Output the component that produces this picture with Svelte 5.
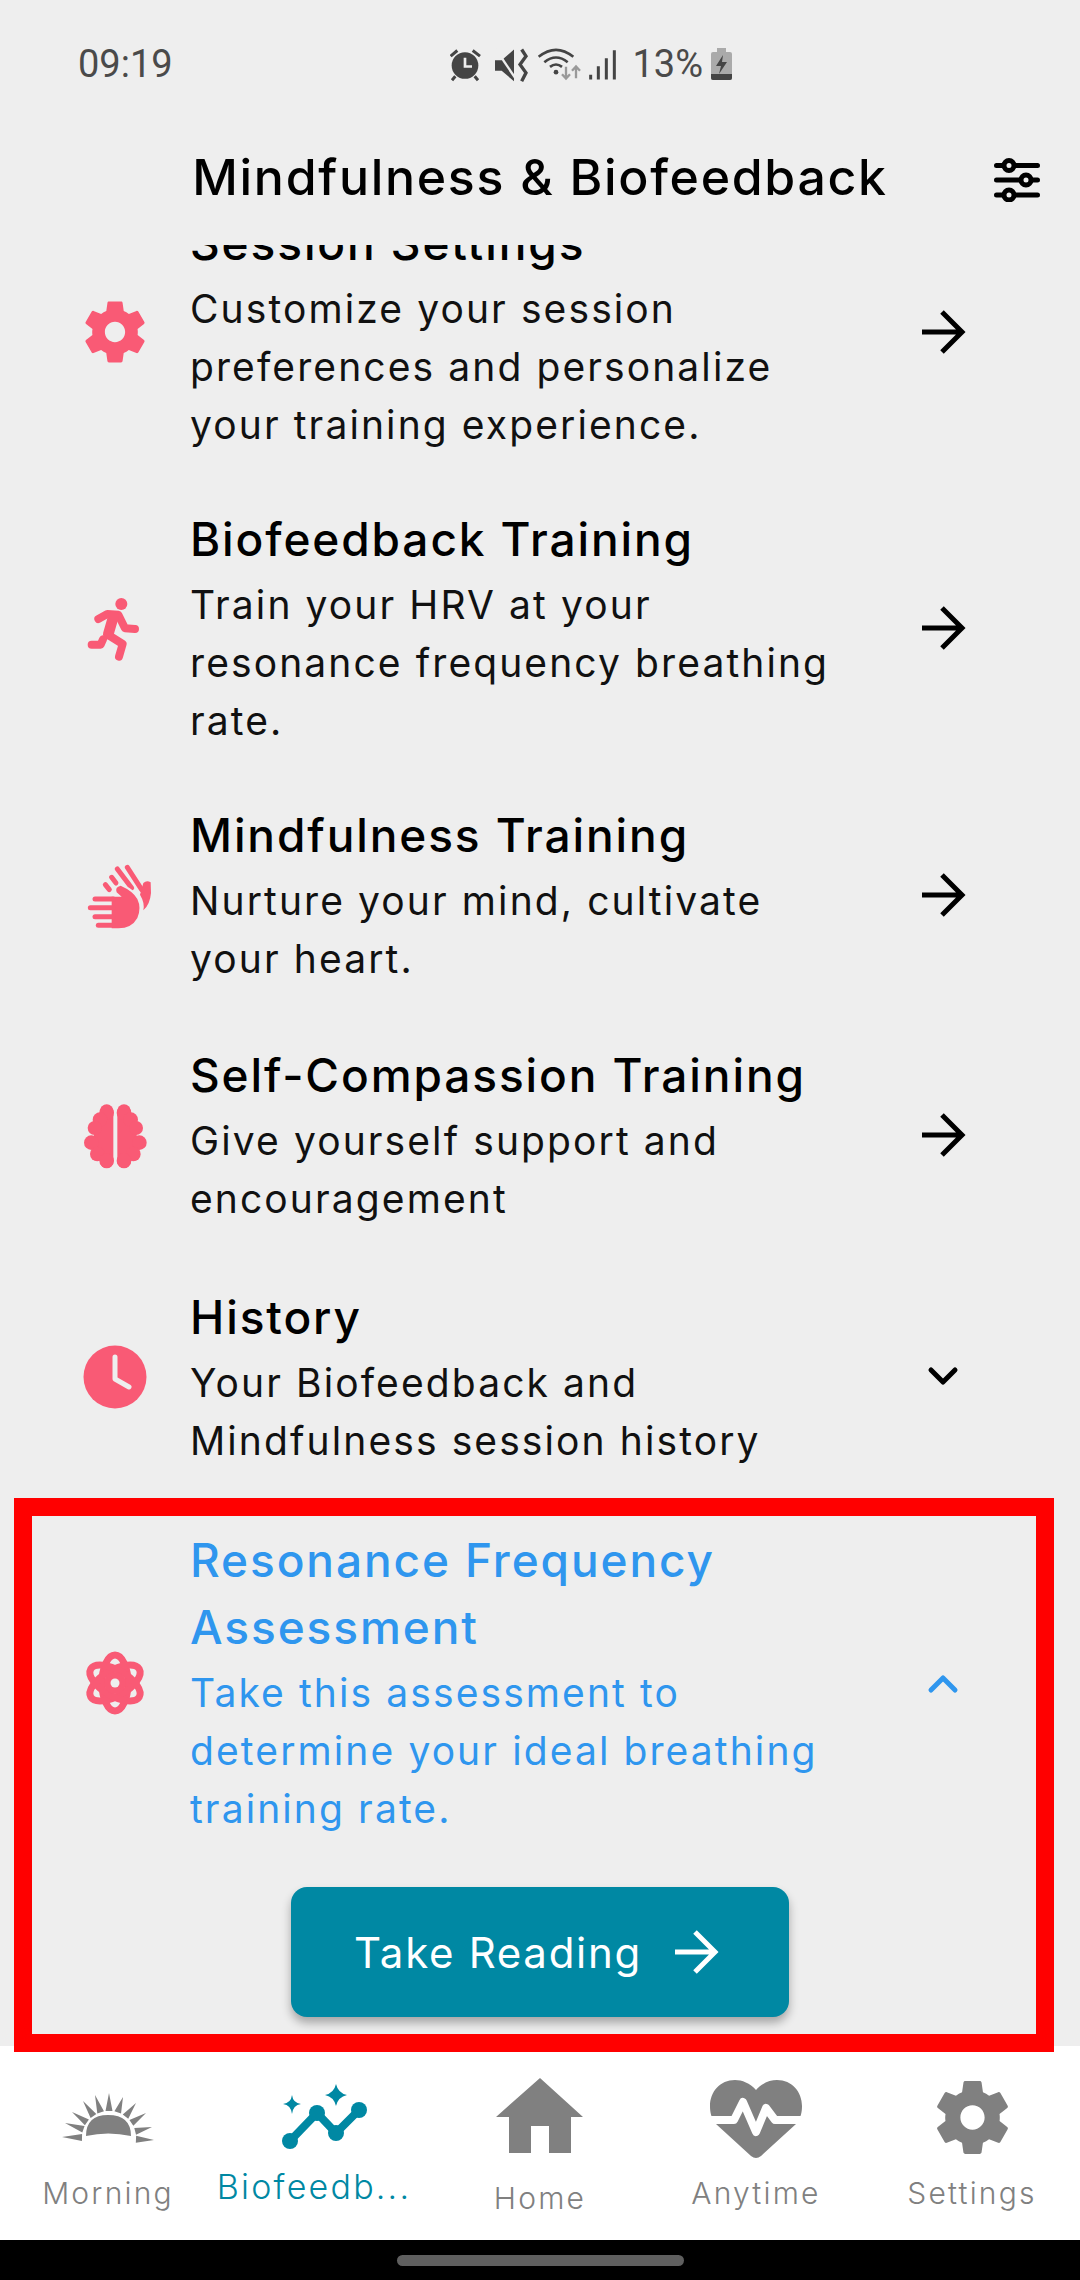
<script>
  const rows = [
    { icon: "gear", title: "Session Settings", text: "Customize your session preferences and personalize your training experience." },
    { icon: "run", title: "Biofeedback Training", text: "Train your HRV at your resonance frequency breathing rate." },
    { icon: "hands", title: "Mindfulness Training", text: "Nurture your mind, cultivate your heart." },
    { icon: "brain", title: "Self-Compassion Training", text: "Give yourself support and encouragement" },
    { icon: "clock", title: "History", text: "Your Biofeedback and Mindfulness session history", end: "down" }
  ];

  const gear =
    "M19.14 12.94c.04-.3.06-.61.06-.94 0-.32-.02-.64-.07-.94l2.03-1.58c.18-.14.23-.41.12-.61l-1.92-3.32c-.12-.22-.37-.29-.59-.22l-2.39.96c-.5-.38-1.03-.7-1.62-.94l-.36-2.54c-.04-.24-.24-.41-.48-.41h-3.84c-.24 0-.43.17-.47.41l-.36 2.54c-.59.24-1.13.57-1.62.94l-2.39-.96c-.22-.08-.47 0-.59.22L2.74 8.87c-.12.21-.08.47.12.61l2.03 1.58c-.05.3-.09.63-.09.94s.02.64.07.94l-2.03 1.58c-.18.14-.23.41-.12.61l1.92 3.32c.12.22.37.29.59.22l2.39-.96c.5.38 1.03.7 1.62.94l.36 2.54c.05.24.24.41.48.41h3.84c.24 0 .44-.17.47-.41l.36-2.54c.59-.24 1.13-.56 1.62-.94l2.39.96c.22.08.47 0 .59-.22l1.92-3.32c.12-.22.07-.47-.12-.61l-2.01-1.58zM12 15.2c-1.76 0-3.2-1.44-3.2-3.2s1.44-3.2 3.2-3.2 3.2 1.44 3.2 3.2-1.44 3.2-3.2 3.2z";

  // sunrise rays, tips measured off the logo
  const tips = [[62, 107], [65, 93], [72, 82], [83, 71], [95, 65], [109, 63], [123, 67], [136, 73], [146, 83], [152, 97], [154, 110]];
  const rays = tips.map(([x, y]) => {
    const dx = x - 109, dy = y - 108;
    const len = Math.hypot(dx, dy);
    const ux = dx / len, uy = dy / len;
    const bx = 109 + ux * 27, by = 108 + uy * 27;
    return `${x},${y} ${bx - uy * 3.5},${by + ux * 3.5} ${bx + uy * 3.5},${by - ux * 3.5}`;
  }).join(" M");

  const brainLobes = [[170, 817, 22], [150, 838, 22], [134, 863, 21], [124, 907, 22], [142, 941, 22], [170, 961, 22]];
</script>

{#snippet arrow(cls)}
  <svg class={cls} viewBox="0 0 60 60"><path d="M9 30H49M29 10L49 30L29 50" /></svg>
{/snippet}

{#snippet rowIcon(name)}
  {#if name === "gear"}
    <svg class="ico" viewBox="0 0 24 24"><path d={gear} /></svg>
  {:else if name === "run"}
    <svg class="ico" viewBox="81 960 228 228">
      <circle cx="214" cy="1002" r="18" />
      <g class="limb">
        <path d="M145 1047L172 1032L205 1034L225 1075L255 1077" />
        <path d="M190 1040L175 1092" stroke-width="32" />
        <path d="M175 1095L218 1122L207 1160" />
        <path d="M159 1108L152 1124L125 1124" />
      </g>
    </svg>
  {:else if name === "hands"}
    <svg class="ico" viewBox="81 52 228 228">
      <g class="limb thin">
        <path d="M232 83L275 150" />
        <path d="M202 88L245 145" />
        <path d="M185 113L198 130" />
        <path d="M166 135L178 150" />
      </g>
      <path d="M270 165L280 130Q290 120 302 128L303 160Q300 195 280 212Q285 190 270 165Z" />
      <path class="gap" d="M205 135Q275 160 272 215Q268 270 205 272" />
      <path d="M185 171L215 171L200 158Q194 142 212 138Q250 155 262 178Q275 205 262 235Q245 266 205 266L185 266Z" />
      <g class="limb thin">
        <path d="M135 178H190" />
        <path d="M121 204H190" />
        <path d="M135 231H190" />
        <path d="M145 257H190" />
      </g>
    </svg>
  {:else if name === "brain"}
    <svg class="ico" viewBox="81 770 228 228">
      <rect x="150" y="792" width="40" height="192" rx="20" />
      <rect x="202" y="792" width="40" height="192" rx="20" />
      <rect x="132" y="830" width="50" height="125" />
      <rect x="210" y="830" width="50" height="125" />
      {#each brainLobes as [x, y, r]}
        <circle cx={x} cy={y} {r} />
        <circle cx={392 - x} cy={y} {r} />
      {/each}
    </svg>
  {:else if name === "clock"}
    <svg class="ico" viewBox="0 0 76 76">
      <circle cx="38" cy="38" r="31.5" />
      <path class="hand" d="M38 18V40L52 48" />
    </svg>
  {:else}
    <svg class="ico" viewBox="0 0 76 76">
      <g class="orbit">
        <ellipse cx="38" cy="38" rx="13" ry="28" />
        <ellipse cx="38" cy="38" rx="13" ry="28" transform="rotate(60 38 38)" />
        <ellipse cx="38" cy="38" rx="13" ry="28" transform="rotate(120 38 38)" />
      </g>
      <circle cx="38" cy="38" r="11" />
      <circle class="dot" cx="38" cy="38" r="4.5" />
    </svg>
  {/if}
{/snippet}

<div class="screen">
  <div class="status">
    <span class="time">09:19</span>
    <div class="status-right">
      <svg class="status-icons" viewBox="40 40 498 110">
        <circle cx="85" cy="98" r="40" fill="#444" />
        <path d="M42 70L62 53M108 53L130 70M56 130L46 142M114 130L124 142" stroke="#444" stroke-width="9" fill="none" />
        <path d="M85 75V101H106" stroke="#eee" stroke-width="8" fill="none" />
        <path d="M175 82H195L232 50V145L195 114H175Z" fill="#444" />
        <path d="M178 50L240 142" stroke="#eee" stroke-width="7" />
        <path d="M255 50L268 70L250 95L268 120L255 145" stroke="#444" stroke-width="10" fill="none" />
        <g stroke="#444" stroke-width="8" fill="none">
          <path d="M306 72Q358 30 410 72" />
          <path d="M323 88Q358 60 393 88" />
          <path d="M340 102Q358 88 376 102" />
        </g>
        <circle cx="358" cy="118" r="7" fill="#444" />
        <path d="M388 102V135M376 124L388 137L400 124M418 136V102M406 114L418 101L430 114" stroke="#999" stroke-width="7" fill="none" />
        <g stroke="#444" stroke-width="9">
          <path d="M462 126V140M485 100V140M509 76V140M533 52V140" />
        </g>
      </svg>
      <span class="pct">13%</span>
      <svg class="battery" viewBox="0 0 21 32">
        <rect x="6" y="0" width="9" height="5" fill="#aaa" />
        <rect x="0" y="4" width="21" height="28" rx="2" fill="#aaa" />
        <path d="M0 26H21V30Q21 32 19 32H2Q0 32 0 30Z" fill="#444" />
        <path d="M12 7L5 18H10L8 26L16 14H11Z" fill="#444" />
      </svg>
    </div>
  </div>

  <header>
    <span></span>
    <h1>Mindfulness &amp; Biofeedback</h1>
    <svg class="sliders" viewBox="0 0 46 44">
      <path d="M2.5 7.5H9M21 7.5H43.5M2.5 22H26M38 22H43.5M2.5 37H9M21 37H43.5" />
      <circle cx="15" cy="7.500" r="5" />
      <circle cx="32" cy="22" r="5" />
      <circle cx="15" cy="37" r="5" />
    </svg>
  </header>

  <div class="list">
    {#each rows as row}
      <div class="row" class:last={row.end === "down"}>
        {@render rowIcon(row.icon)}
        <div class="copy">
          <h2>{row.title}</h2>
          <p>{row.text}</p>
        </div>
        {#if row.end === "down"}
          <svg class="chev" viewBox="0 0 60 60"><path d="M18 23L30 35L42 23" /></svg>
        {:else}
          {@render arrow("go")}
        {/if}
      </div>
    {/each}

    <div class="row open">
      {@render rowIcon("atom")}
      <div class="copy">
        <h2>Resonance Frequency Assessment</h2>
        <p>Take this assessment to determine your ideal breathing training rate.</p>
      </div>
      <svg class="chev" viewBox="0 0 60 60"><path d="M18 37L30 25L42 37" /></svg>
    </div>
    <button>
      <span>Take Reading</span>
      {@render arrow("go white")}
    </button>
  </div>

  <nav>
    <div class="tab">
      <svg viewBox="58 38 100 100">
        <path class="grey" d="M{rays}Z" />
        <path class="grey" d="M86 106Q86 85 108 85Q131 85 131 106Q108 101 86 106Z" />
      </svg>
      <span>Morning</span>
    </div>
    <div class="tab active">
      <svg viewBox="273 2068 100 100">
        <path class="line" d="M289 2141L316 2113L335 2133L358 2110" />
        <circle cx="289" cy="2141" r="8" />
        <circle cx="316" cy="2113" r="8" />
        <circle cx="335" cy="2133" r="8" />
        <circle cx="358" cy="2110" r="8" />
        <path d="M335 2084Q337 2093 346 2095Q337 2097 335 2106Q333 2097 324 2095Q333 2093 335 2084Z" />
        <path d="M291 2095Q292 2103 300 2104Q292 2105 291 2114Q290 2105 282 2104Q290 2103 291 2095Z" />
      </svg>
      <span>Biofeedb...</span>
    </div>
    <div class="tab home">
      <svg viewBox="490 2068 100 100">
        <path class="grey" d="M540 2078L583 2117H571V2153H549V2126H531V2153H509V2117H496Z" />
      </svg>
      <span>Home</span>
    </div>
    <div class="tab">
      <svg viewBox="706 2068 100 100">
        <path class="grey" d="M756 2090C750 2083 742 2080 735 2080C720 2080 710 2092 710 2106C710 2112 711 2118 716 2124L751 2156Q756 2160 761 2156L796 2124C801 2118 802 2112 802 2106C802 2092 792 2080 777 2080C770 2080 762 2083 756 2090Z" />
        <path class="pulse" d="M706 2120H734L743 2102L756 2132L766 2108L775 2120H806" />
      </svg>
      <span>Anytime</span>
    </div>
    <div class="tab">
      <svg viewBox="0 0 24 24" class="navgear"><path class="grey" d={gear} /></svg>
      <span>Settings</span>
    </div>
  </nav>

  <div class="homebar"><i></i></div>

  <div class="highlight"></div>
</div>

<style>
  :global(body) {
    background: #eee;
  }

  .screen {
    position: relative;
    width: 1080px;
    height: 2280px;
    display: flex;
    flex-direction: column;
    overflow: hidden;
    background: #eee;
    font-family: Inter, "Liberation Sans", sans-serif;
  }

  .status {
    height: 115px;
    flex: none;
    display: flex;
    align-items: flex-start;
    padding: 44px 348px 0 78px;
    box-sizing: border-box;
    justify-content: space-between;
    font-family: Roboto, sans-serif;
    color: #4a4a4a;
  }

  .time,
  .pct {
    font-size: 38px;
    line-height: 40px;
  }

  .status-right {
    display: flex;
    align-items: center;
    height: 40px;
  }

  .status-icons {
    width: 166px;
    height: 37px;
    margin-right: 16px;
  }

  .battery {
    width: 21px;
    height: 32px;
    margin-left: 8px;
  }

  header {
    height: 130px;
    flex: none;
    display: grid;
    grid-template-columns: 1fr auto 1fr;
    align-items: center;
    padding: 0 40px;
    box-sizing: border-box;
  }

  h1 {
    margin: 0;
    font-size: 50px;
    font-weight: 500;
    letter-spacing: 1.7px;
    color: #000;
    padding-bottom: 6px;
  }

  .sliders {
    width: 46px;
    height: 44px;
    justify-self: end;
    fill: none;
    stroke: #000;
    stroke-width: 5;
    stroke-linecap: round;
  }

  .list {
    flex: 1;
    min-height: 0;
    overflow: hidden;
    display: flex;
    flex-direction: column;
    align-items: stretch;
  }

  .row {
    flex: none;
    display: flex;
    align-items: center;
    padding: 26px 107px 26px 77px;
  }

  .row:first-child {
    margin-top: -61px;
  }

  .row:nth-child(4) {
    margin-top: 2px;
  }

  .row.last {
    margin-top: 4px;
  }

  .row.open {
    padding-top: 31px;
  }

  .copy {
    width: 655px;
    margin-left: 37px;
  }

  h2 {
    margin: 0 0 3px;
    font-size: 46px;
    line-height: 67px;
    font-weight: 500;
    letter-spacing: 1.9px;
    color: #000;
  }

  .copy p {
    margin: 0;
    font-size: 39px;
    line-height: 58px;
    font-weight: 400;
    letter-spacing: 2.1px;
    color: #111;
  }

  .open h2,
  .open p {
    color: #2f96ee;
  }

  .ico {
    width: 76px;
    height: 76px;
    flex: none;
    fill: #f95a75;
  }

  .limb {
    fill: none;
    stroke: #f95a75;
    stroke-width: 24;
    stroke-linecap: round;
    stroke-linejoin: round;
  }

  .limb.thin {
    stroke-width: 15;
  }

  .gap {
    fill: none;
    stroke: #eee;
    stroke-width: 10;
  }

  .hand {
    fill: none;
    stroke: #eee;
    stroke-width: 5;
    stroke-linecap: round;
    stroke-linejoin: round;
  }

  .orbit {
    fill: none;
    stroke: #f95a75;
    stroke-width: 7;
  }

  .dot {
    fill: #eee;
  }

  .go,
  .chev {
    width: 60px;
    height: 60px;
    flex: none;
    margin-left: auto;
    fill: none;
    stroke: #000;
    stroke-width: 5;
  }

  .chev {
    stroke-linecap: round;
    stroke-linejoin: round;
  }

  .open .chev {
    stroke: #2f96ee;
  }

  .go.white {
    stroke: #fff;
    margin-left: 24px;
  }

  button {
    flex: none;
    align-self: center;
    width: 498px;
    height: 130px;
    margin: 23px 0 0;
    border: none;
    border-radius: 16px;
    background: #0088a3;
    box-shadow: 0 6px 10px rgba(0, 0, 0, 0.3);
    color: #fff;
    font: inherit;
    font-size: 42px;
    letter-spacing: 1.7px;
    display: flex;
    align-items: center;
    justify-content: center;
  }

  nav {
    position: relative;
    height: 194px;
    flex: none;
    display: grid;
    grid-template-columns: repeat(5, 216px);
    background: #fff;
  }

  .tab {
    display: flex;
    flex-direction: column;
    align-items: center;
    padding-top: 22px;
    color: #808080;
    font-size: 30px;
    font-weight: 300;
    letter-spacing: 2.2px;
  }

  .tab svg {
    width: 100px;
    height: 100px;
    flex: none;
    fill: #0088a3;
  }

  .tab svg.navgear {
    width: 91px;
    height: 91px;
    margin: 4px 4px 5px;
  }

  .tab span {
    margin-top: 7px;
    line-height: 36px;
    white-space: nowrap;
  }

  .tab.active {
    color: #0088a3;
    font-size: 34px;
  }

  .tab.active span {
    margin-top: 1px;
    transform: translateX(-10px);
  }

  .tab.home span {
    margin-top: 12px;
  }

  .grey {
    fill: #808080;
  }

  .line {
    fill: none;
    stroke: #0088a3;
    stroke-width: 8;
  }

  .pulse {
    fill: none;
    stroke: #fff;
    stroke-width: 8;
    stroke-linejoin: round;
  }

  .homebar {
    height: 40px;
    flex: none;
    background: #000;
    display: flex;
    justify-content: center;
    padding-top: 15px;
    box-sizing: border-box;
  }

  .homebar i {
    display: block;
    width: 287px;
    height: 11px;
    border-radius: 6px;
    background: #5f5f5f;
  }

  .highlight {
    position: absolute;
    left: 14px;
    top: 1498px;
    width: 1040px;
    height: 554px;
    box-sizing: border-box;
    border: 18px solid #f00;
    pointer-events: none;
  }
</style>
